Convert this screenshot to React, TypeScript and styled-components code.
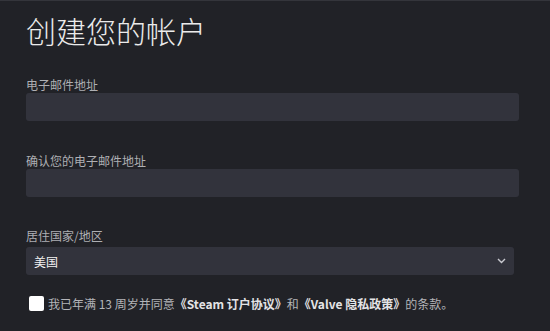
import React from "react";
import styled, { createGlobalStyle } from "styled-components";

const GlobalStyle = createGlobalStyle`
  html, body {
    margin: 0;
    padding: 0;
    background: #212227;
  }
  body {
    font-family: "Noto Sans", "Noto Sans CJK SC", sans-serif;
  }
`;

const Page = styled.div`
  width: 550px;
  height: 331px;
  box-sizing: border-box;
  border-top: 1px solid #34353b;
  background: #212227;
  padding: 9px 31px 0 26px;
  display: flex;
  flex-direction: column;
  overflow: hidden;
`;

const Title = styled.h1`
  margin: 0;
  font-family: "Noto Sans CJK SC", sans-serif;
  font-size: 30px;
  line-height: 40px;
  font-weight: 300;
  color: #ebebeb;
  letter-spacing: 0;
`;

const Field = styled.div<{ $top: number; $gap: number }>`
  display: flex;
  flex-direction: column;
  gap: ${(p) => p.$gap}px;
  margin-top: ${(p) => p.$top}px;
`;

const Label = styled.label`
  font-family: "Noto Sans CJK SC", sans-serif;
  font-size: 12px;
  line-height: 14px;
  color: #aeafb3;
`;

const TextInput = styled.div`
  height: 28px;
  width: 493px;
  border-radius: 3px;
  background: #32333c;
`;

const Select = styled.div`
  height: 28px;
  width: 488px;
  border-radius: 3px;
  background: #32333c;
  display: flex;
  align-items: center;
  justify-content: space-between;
  padding: 0 8px 0 8px;
  box-sizing: border-box;
  font-family: "Noto Sans CJK SC", sans-serif;
  font-size: 12px;
  color: #f2f2f2;
`;

const Agree = styled.div`
  display: flex;
  align-items: center;
  gap: 4px;
  margin-top: 20px;
  padding-left: 3px;
`;

const Box = styled.span`
  width: 15px;
  height: 15px;
  border-radius: 2px;
  background: #ffffff;
  flex-shrink: 0;
`;

const AgreeText = styled.span`
  font-family: "Noto Sans CJK SC", sans-serif;
  font-size: 12px;
  color: #b4b5b9;
  white-space: nowrap;
`;

const Strong = styled.b`
  font-weight: 700;
  color: #e4e4e6;
`;

const Chevron = () => (
  <svg width="9" height="6" viewBox="0 0 9 6" fill="none">
    <path d="M1 1l3.5 3.5L8 1" stroke="#c9cad0" strokeWidth="1.4" />
  </svg>
);

export default function App() {
  return (
    <>
      <GlobalStyle />
      <Page>
        <Title>创建您的帐户</Title>
        <Field $top={28} $gap={1}>
          <Label>电子邮件地址</Label>
          <TextInput />
        </Field>
        <Field $top={33} $gap={1}>
          <Label>确认您的电子邮件地址</Label>
          <TextInput />
        </Field>
        <Field $top={32} $gap={4}>
          <Label>居住国家/地区</Label>
          <Select>
            <span>美国</span>
            <Chevron />
          </Select>
        </Field>
        <Agree>
          <Box />
          <AgreeText>
            我已年满 13 周岁并同意<Strong>《Steam 订户协议》</Strong>和
            <Strong>《Valve 隐私政策》</Strong>的条款。
          </AgreeText>
        </Agree>
      </Page>
    </>
  );
}
